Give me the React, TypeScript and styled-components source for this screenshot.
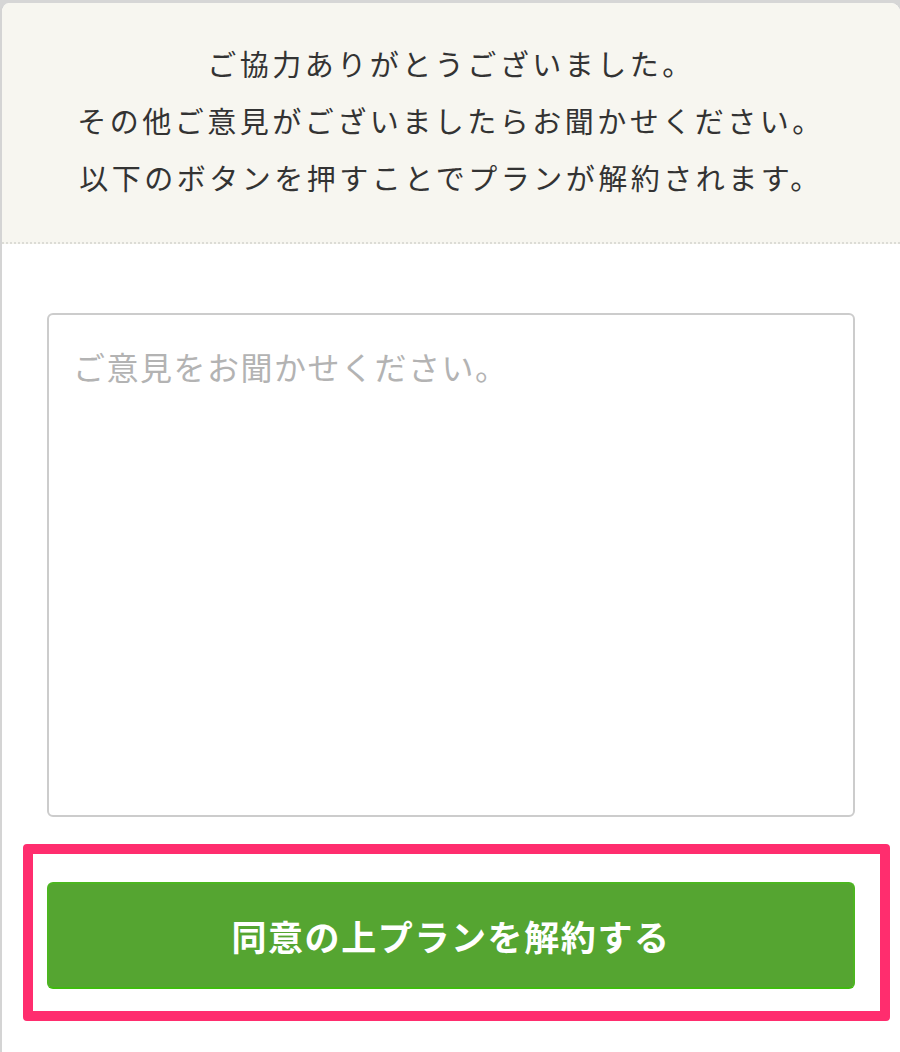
import React from 'react';
import styled, { createGlobalStyle } from 'styled-components';

const GlobalStyle = createGlobalStyle`
  html, body {
    margin: 0;
    padding: 0;
    background: #d6d6d6;
  }
  body {
    font-family: 'Noto Sans CJK JP', 'Noto Sans', sans-serif;
  }
`;

const messages = [
  'ご協力ありがとうございました。',
  'その他ご意見がございましたらお聞かせください。',
  '以下のボタンを押すことでプランが解約されます。',
];

const CancelFeedback = () => (
  <Page>
    <Card>
      <Header>
        {messages.map((line) => (
          <Line key={line}>{line}</Line>
        ))}
      </Header>
      <Body>
        <Feedback placeholder="ご意見をお聞かせください。" />
        <ButtonArea>
          <Highlight />
          <SubmitButton type="button">同意の上プランを解約する</SubmitButton>
        </ButtonArea>
      </Body>
    </Card>
  </Page>
);

const Page = styled.div`
  padding-top: 3px;
  height: 1049px;
  overflow: hidden;
`;

const Card = styled.div`
  width: 898px;
  min-height: 1060px;
  background: #ffffff;
  border-left: 2px solid #d4d4d4;
  border-radius: 9px 9px 0 0;
  overflow: hidden;
`;

const Header = styled.div`
  background: #f7f6f0;
  padding: 32px 0 36px 0;
  border-bottom: 2px dotted #dcdcd6;
  text-align: center;
`;

const Line = styled.p`
  margin: 0;
  font-size: 29px;
  line-height: 57px;
  letter-spacing: 3.5px;
  color: #333333;
`;

const Body = styled.div`
  padding: 69px 45px 0 45px;
  display: flex;
  flex-direction: column;
`;

const Feedback = styled.textarea`
  box-sizing: border-box;
  width: 100%;
  height: 504px;
  border: 2px solid #cccccc;
  border-radius: 6px;
  padding: 27px 24px;
  font-family: 'Noto Sans CJK JP', 'Noto Sans', sans-serif;
  font-size: 32px;
  line-height: 48px;
  letter-spacing: 1.5px;
  color: #333333;
  resize: none;
  outline: none;

  &::placeholder {
    color: #b3b3b3;
  }
`;

const ButtonArea = styled.div`
  position: relative;
  margin-top: 65px;
`;

const Highlight = styled.div`
  position: absolute;
  top: -38px;
  left: -24px;
  right: -35px;
  bottom: -32px;
  border: 10px solid #ff2d6e;
  border-radius: 4px;
  pointer-events: none;
`;

const SubmitButton = styled.button`
  box-sizing: border-box;
  width: 100%;
  height: 107px;
  background: #55a531;
  border: 2px solid #4cb520;
  border-bottom-color: #3fbb0d;
  border-radius: 6px;
  color: #ffffff;
  font-family: 'Noto Sans CJK JP', 'Noto Sans', sans-serif;
  font-size: 35px;
  font-weight: 700;
  letter-spacing: 1.6px;
  cursor: pointer;
`;

const App = () => (
  <>
    <GlobalStyle />
    <CancelFeedback />
  </>
);

export default App;
